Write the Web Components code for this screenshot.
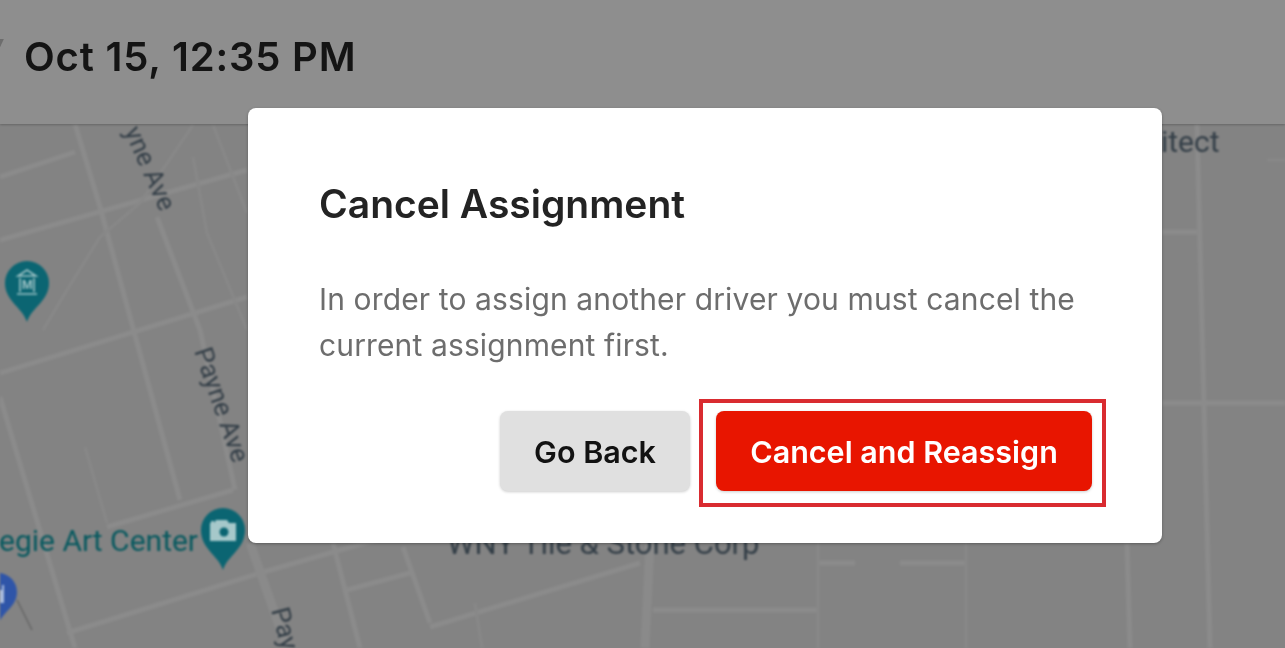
<!DOCTYPE html>
<html lang="en">
<head>
<meta charset="utf-8">
<title>Cancel Assignment</title>
<style>
  html, body { margin: 0; height: 100%; overflow: hidden; background: #838383; }
  body { font-family: "Inter", "Liberation Sans", sans-serif; }
</style>
</head>
<body>
<app-screen>
  <top-bar slot="bar">Oct 15, 12:35 PM</top-bar>
  <map-canvas slot="map"></map-canvas>
  <confirm-dialog slot="dialog" heading="Cancel Assignment">
    In order to assign another driver you must cancel the current assignment first.
    <action-button slot="actions" kind="plain">Go Back</action-button>
    <action-button slot="actions" kind="danger" marked>Cancel and Reassign</action-button>
  </confirm-dialog>
</app-screen>

<script>
class AppScreen extends HTMLElement {
  constructor() {
    super();
    this.attachShadow({ mode: 'open' });
    this.shadowRoot.innerHTML = `
      <style>
        :host { display: flex; flex-direction: column; width: 1285px; height: 648px; position: relative; overflow: hidden; }
        .overlay { position: absolute; inset: 0; z-index: 2; display: flex; justify-content: flex-start; align-items: flex-start; padding: 108px 0 0 248px; box-sizing: border-box; }
      </style>
      <slot name="bar"></slot>
      <slot name="map"></slot>
      <div class="overlay"><slot name="dialog"></slot></div>
    `;
  }
}

class TopBar extends HTMLElement {
  constructor() {
    super();
    this.attachShadow({ mode: 'open' });
    this.shadowRoot.innerHTML = `
      <style>
        :host { display: flex; align-items: center; height: 124px; flex: none; box-sizing: border-box; padding: 0 0 11px 24px; position: relative; z-index: 1;
          background: #8e8e8e; box-shadow: 0 1px 2px rgba(0,0,0,.22); color: #141414; font: 600 40px/1 "Inter", sans-serif; letter-spacing: .82px; filter: blur(.7px); }
        .mark { position: absolute; left: -3px; top: 39px; width: 5px; height: 8px; background: #6d6d6d; transform: skewX(-25deg); }
      </style>
      <span class="mark"></span><slot></slot>
    `;
  }
}

class MapCanvas extends HTMLElement {
  constructor() {
    super();
    this.attachShadow({ mode: 'open' });
    this.shadowRoot.innerHTML = `
      <style>
        :host { display: block; flex: 1; min-height: 0; background: #838383; filter: blur(.8px); }
        svg { display: block; }
        .road { fill: none; stroke: #8b8b8b; stroke-width: 5; }
        .wide { fill: none; stroke: #8a8a8a; stroke-width: 9; }
        .thin { fill: none; stroke: #888; stroke-width: 3; }
        text { font-family: "Roboto", sans-serif; font-size: 30px; fill: #333e47; }
        .poi { fill: #08595f; }
      </style>
      <svg width="1285" height="524" viewBox="0 124 1285 524">
        <path class="road" d="M0 177L75 152M75 124L100 207L180 500M0 240L247 170M0 373L247 297M0 397L75 648M157 217L200 330L235 490"/>
        <path class="road" d="M107 527L233 490M67 633L260 573L410 530M347 590L410 573M333 543L360 648M403 547L430 623M430 627L640 563M653 610H818M818 563H855M900 563H966M1162 403H1285M1162 232H1197"/>
        <path class="wide" d="M250 543L287 648M650 543L645 648"/>
        <path class="thin" d="M43 330L67 290L100 237L140 203L193 125M193 157L207 233L247 330M213 125L247 213M85 447L107 523M475 603L482 648M818 543V648M966 543V648M1267 160H1285"/>
        <path class="road" d="M1197 124L1210 648M1127 543L1130 648"/>
        <path d="M17 600L32 630" stroke="#555" stroke-width="1" fill="none"/>

        <text x="124" y="131" transform="rotate(66 124 131)" style="font-size:26px">yne Ave</text>
        <text x="194" y="351" transform="rotate(71 194 351)" style="font-size:26px">Payne Ave</text>
        <text x="271" y="610" transform="rotate(75 271 610)" style="font-size:26px">Pay</text>
        <text x="1161" y="152">itect</text>
        <text x="447" y="554" style="font-size:31px">WNY Tile &amp; Stone Corp</text>
        <text class="poi" x="-1" y="551">egie Art Center</text>

        <g>
          <path fill="#0b6572" d="M27 322C22 307 5 301 5 283a22 22 0 0 1 44 0C49 301 32 307 27 322Z"/>
          <path fill="none" stroke="#9ec3c6" stroke-width="1.6" d="M18 276L27 270L36 276ZM17 294H37M20 278V292M34 278V292"/>
          <text x="22" y="289" style="font-size:12px;font-weight:700;fill:#9ec3c6">M</text>
        </g>
        <g>
          <path fill="#0b6572" d="M223 570C218 555 201 549 201 530a22 22 0 0 1 44 0C245 549 228 555 223 570Z"/>
          <path fill="#a6c8ca" fill-rule="evenodd" d="M210 523h4l2-3h11l2 3h7v18h-26ZM211 521h3v2h-3Z"/>
          <circle cx="224" cy="532" r="4.5" fill="#0b6572"/>
        </g>
        <g>
          <path fill="#2f55a8" d="M-2 625C-6 612 -21 607 -21 592a19 19 0 0 1 38 0C17 607 2 612 -2 625Z"/>
          <path fill="#a9bcdd" d="M-6 590h8v-5h2v18h-10Z"/>
        </g>
      </svg>
    `;
  }
}

class ConfirmDialog extends HTMLElement {
  constructor() {
    super();
    this.attachShadow({ mode: 'open' });
    this.shadowRoot.innerHTML = `
      <style>
        :host { display: flex; flex-direction: column; width: 914px; height: 435px; box-sizing: border-box; padding: 71px 70px 0 71px;
          background: #fff; border-radius: 8px; box-shadow: 0 1px 3px rgba(0,0,0,.3); filter: blur(.55px); }
        h2 { margin: 0; color: #232323; font: 600 39px/50px "Inter", sans-serif; }
        p { margin: 47px 0 0; color: #6d6d6d; font: 400 30px/46px "Inter", sans-serif; letter-spacing: .13px; }
        .actions { display: flex; justify-content: flex-end; gap: 26px; margin-top: 43px; }
      </style>
      <h2></h2>
      <p><slot></slot></p>
      <div class="actions"><slot name="actions"></slot></div>
    `;
  }
  connectedCallback() {
    this.shadowRoot.querySelector('h2').textContent = this.getAttribute('heading') || '';
  }
}

class ActionButton extends HTMLElement {
  constructor() {
    super();
    this.attachShadow({ mode: 'open' });
    this.shadowRoot.innerHTML = `
      <style>
        :host { display: flex; align-items: center; justify-content: center; height: 80px; box-sizing: border-box; padding-top: 2px; border-radius: 8px; position: relative;
          font: 600 30.5px/1 "Inter", sans-serif; box-shadow: 0 1px 3px rgba(0,0,0,.2); }
        :host([kind="plain"]) { width: 190px; background: #e0e0e0; color: #121212; }
        :host([kind="danger"]) { width: 376px; background: #e81500; color: #fff; }
        :host([marked])::after { content: ""; position: absolute; inset: -12px -14px -16px -17px; border: 4px solid #d92b30; }
      </style>
      <slot></slot>
    `;
  }
}

customElements.define('app-screen', AppScreen);
customElements.define('top-bar', TopBar);
customElements.define('map-canvas', MapCanvas);
customElements.define('confirm-dialog', ConfirmDialog);
customElements.define('action-button', ActionButton);
</script>
</body>
</html>
